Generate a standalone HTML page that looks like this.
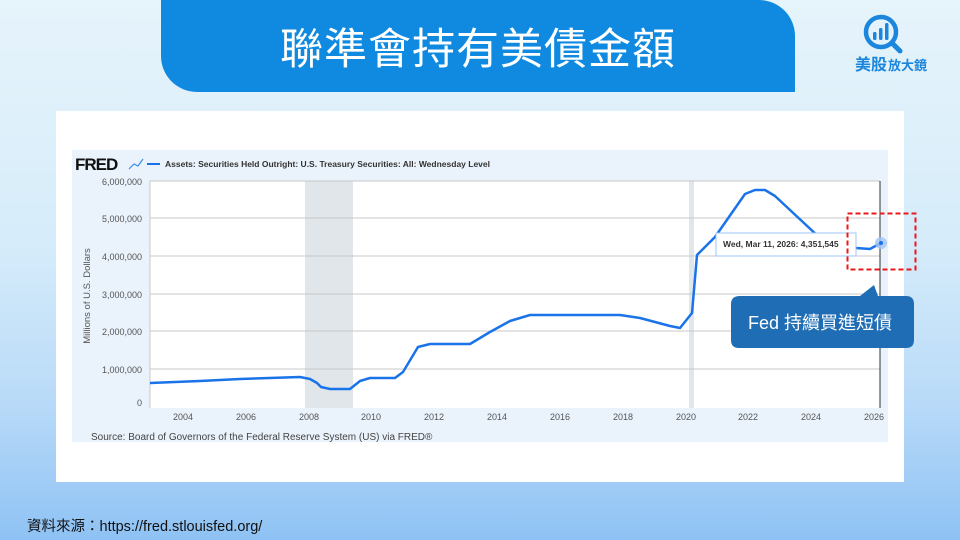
<!DOCTYPE html>
<html><head><meta charset="utf-8"><style>
*{margin:0;padding:0;box-sizing:border-box}
body{width:960px;height:540px;overflow:hidden;position:relative;font-family:"Liberation Sans","Noto Sans CJK TC",sans-serif;background:linear-gradient(180deg,#e6f4fb 0%,#d6ecfa 45%,#b8daf8 75%,#8ec2f4 100%)}
.banner{position:absolute;left:161px;top:0;width:634px;height:92px;background:#0f8ae0;border-radius:0 36px 0 36px}
.title{position:absolute;left:161px;width:634px;top:16px;text-align:center;color:#fff;font-size:43px;font-family:"Noto Sans CJK TC",sans-serif;letter-spacing:1px;line-height:60px}
.card{position:absolute;left:56px;top:111px;width:848px;height:371px;background:#fff}
.src{position:absolute;left:27px;top:515px;font-size:14.5px;color:#111}
.src span{font-family:"Noto Sans CJK TC",sans-serif}
</style></head><body>
<div class="banner"></div>
<div class="title">聯準會持有美債金額</div>
<svg style="position:absolute;left:852px;top:10px" width="100" height="70">
<circle cx="29" cy="22" r="15" fill="none" stroke="#1c86dd" stroke-width="4.5"/>
<line x1="40" y1="33" x2="48" y2="41" stroke="#1c86dd" stroke-width="5" stroke-linecap="round"/>
<rect x="21" y="22" width="3.5" height="8" rx="1.5" fill="#1c86dd"/>
<rect x="27" y="18" width="3.5" height="12" rx="1.5" fill="#1c86dd"/>
<rect x="33" y="13" width="3.5" height="17" rx="1.5" fill="#1c86dd"/>
<text x="3" y="60" font-size="16" font-weight="bold" fill="#1c86dd" font-family="Noto Sans CJK TC,sans-serif">美股</text>
<text x="36" y="60" font-size="13" font-weight="bold" fill="#1c86dd" font-family="Noto Sans CJK TC,sans-serif">放大鏡</text>
</svg>
<div class="card"></div>
<svg style="position:absolute;left:0;top:0" width="960" height="540">
<rect x="72" y="150" width="816" height="292" fill="#eaf2fb"/>
<text x="75" y="170" font-size="17" font-weight="bold" fill="#111" letter-spacing="-1">FRED</text>
<polyline points="129,169 134,164 138,166 143,159" fill="none" stroke="#3a8ee6" stroke-width="1.2"/>
<line x1="147" y1="164" x2="160" y2="164" stroke="#1a73e8" stroke-width="2"/>
<text x="165" y="167" font-size="8.5" font-weight="bold" fill="#333">Assets: Securities Held Outright: U.S. Treasury Securities: All: Wednesday Level</text>
<rect x="150" y="181" width="730" height="227" fill="#fff"/>
<rect x="305" y="181" width="48" height="227" fill="#e1e6ea"/>
<rect x="689" y="181" width="5" height="227" fill="#e1e6ea"/>
<g stroke="#c8c8c8" stroke-width="1">
<line x1="150" y1="181" x2="880" y2="181"/><line x1="150" y1="218" x2="880" y2="218"/><line x1="150" y1="256" x2="880" y2="256"/><line x1="150" y1="294" x2="880" y2="294"/><line x1="150" y1="331" x2="880" y2="331"/><line x1="150" y1="369" x2="880" y2="369"/><line x1="150" y1="181" x2="150" y2="408"/>
</g>
<line x1="880" y1="181" x2="880" y2="408" stroke="#333"/>
<g font-size="9" fill="#555" text-anchor="end">
<text x="142" y="185">6,000,000</text><text x="142" y="222">5,000,000</text><text x="142" y="260">4,000,000</text><text x="142" y="298">3,000,000</text><text x="142" y="335">2,000,000</text><text x="142" y="373">1,000,000</text><text x="142" y="406">0</text>
</g>
<g font-size="9" fill="#555" text-anchor="middle">
<text x="183" y="420">2004</text><text x="246" y="420">2006</text><text x="309" y="420">2008</text><text x="371" y="420">2010</text><text x="434" y="420">2012</text><text x="497" y="420">2014</text><text x="560" y="420">2016</text><text x="623" y="420">2018</text><text x="686" y="420">2020</text><text x="748" y="420">2022</text><text x="811" y="420">2024</text><text x="874" y="420">2026</text>
</g>
<text transform="translate(90,296) rotate(-90)" font-size="9.5" fill="#555" text-anchor="middle">Millions of U.S. Dollars</text>
<polyline fill="none" stroke="#1a73e8" stroke-width="2.5" stroke-linejoin="round" points="150,383 200,381 240,379 300,377 310,379 317,383 321,387 330,389 350,389 360,381 370,378 395,378 403,372 418,347 430,344 470,344 490,332 510,321 530,315 560,315 620,315 640,318 670,326 680,328 692,313 697,255 715,237 745,194 755,190 765,190 775,196 820,238 832,251"/>
<polyline fill="none" stroke="#1a73e8" stroke-width="2.5" points="856,248 870,249 881,243"/>
<circle cx="881" cy="243" r="6" fill="#9fc5f8" opacity="0.8"/>
<circle cx="881" cy="243" r="2" fill="#1a73e8"/>
<rect x="716" y="233" width="140" height="23" fill="#fff" stroke="#9fc5f8"/>
<text x="723" y="247" font-size="8.5" font-weight="bold" fill="#333">Wed, Mar 11, 2026:  4,351,545</text>
<text x="91" y="440" font-size="10" fill="#444">Source: Board of Governors of the Federal Reserve System (US) via FRED®</text>
<rect x="847.5" y="213.5" width="68" height="56" fill="none" stroke="#e8191d" stroke-width="2" stroke-dasharray="5,3"/>
<path d="M740,296 L860,296 L874,285 L878,296 L906,296 Q914,296 914,304 L914,340 Q914,348 906,348 L739,348 Q731,348 731,340 L731,304 Q731,296 740,296 Z" fill="#1f6db4"/>
<text x="748" y="329" font-size="18" fill="#fff" font-family="Liberation Sans,Noto Sans CJK TC,sans-serif">Fed 持續買進短債</text>
</svg>
<div class="src"><span>資料來源：</span>https://fred.stlouisfed.org/</div>
</body></html>
